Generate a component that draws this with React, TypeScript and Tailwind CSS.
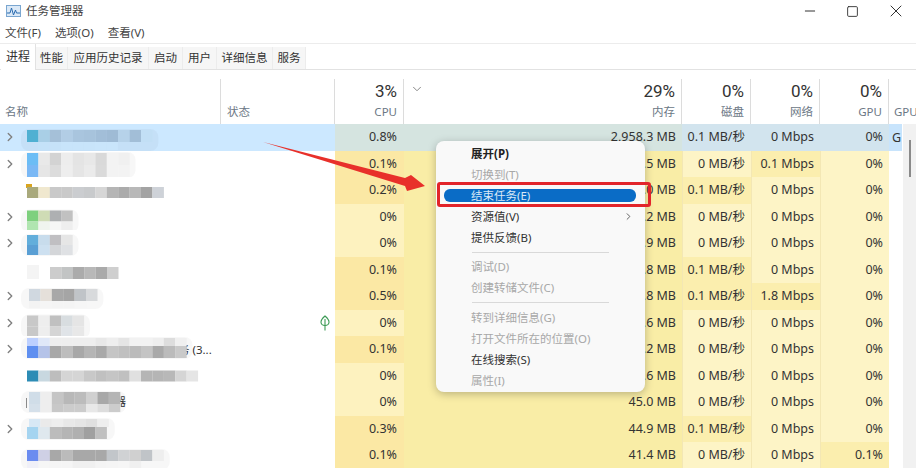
import { ChevronDown, ChevronRight, Minus, Square, X } from 'lucide-react';

const FONT = "font-['Noto_Sans','Noto_Sans_CJK_SC',sans-serif]";

// 每行的马赛克：y 相对行顶，x 默认从 27 开始，单元 11.4px 宽
type Mosaic = { y: number; h: number; x?: number; w?: number; cells: string[] };

type Row = {
  cpu: string;
  mem: string;
  disk: string;
  net: string;
  gpu: string;
  expand?: boolean;
  mosaic: Mosaic[];
};

const rows: Row[] = [
  {
    cpu: '0.8%', mem: '2,958.3 MB', disk: '0.1 MB/秒', net: '0 Mbps', gpu: '0%', expand: true,
    mosaic: [
      { y: 6, h: 12, cells: ['#4fb0d2', '#a9cfe6', '#a5c0d8', '#b2cde5', '#a9c5de', '#a7c3dc', '#a2bed8', '#9fbbd5', '#b6d2e9', '#a2bed7', '#c2dff5'] },
      { y: 18, h: 8, x: 38, cells: ['#c4e2f8', '#c6e2f8', '#c8e4fa', '#c8e4fa', '#c8e4fa', '#c9e5fb', '#c9e5fb'] },
    ],
  },
  {
    cpu: '0.1%', mem: '271.5 MB', disk: '0 MB/秒', net: '0.1 Mbps', gpu: '0%', expand: true,
    mosaic: [
      { y: 2, h: 12, cells: ['#6cbdf5', '#e9e9e9', '#d3d3d3', '#ededed', '#e4e4e4', '#e8e8e8', '#d9d9d9', '#f3f3f3', '#f0f0f0'] },
      { y: 14, h: 12, cells: ['#7ab8f5', '#e6e6e6', '#dcdcdc', '#eeeeee', '#e5e5e5', '#ebebeb', '#dadada', '#f3f3f3', '#f3f3f3'] },
    ],
  },
  {
    cpu: '0.2%', mem: '190.0 MB', disk: '0.1 MB/秒', net: '0 Mbps', gpu: '0%',
    mosaic: [
      { y: 7, h: 4, x: 26, w: 6, cells: ['#d9a520'] },
      { y: 10, h: 11, cells: ['#a9a97c', '#f0e8cf', '#c9c9c9', '#c9c9c9', '#cbcdd0', '#c8cacc', '#d6d6d6', '#b5b5b5', '#ababab', '#b8b8b8', '#a3a3a3', '#ced2d8'] },
    ],
  },
  {
    cpu: '0%', mem: '151.2 MB', disk: '0 MB/秒', net: '0 Mbps', gpu: '0%', expand: true,
    mosaic: [
      { y: 6.5, h: 11, cells: ['#7ed07e', '#cfdcb5', '#aeb0b2', '#c1c1c1'] },
      { y: 17.5, h: 10, cells: ['#b0e5b0', '#f0f4ee', '#f6f6f6', '#eeeeee'] },
    ],
  },
  {
    cpu: '0%', mem: '128.9 MB', disk: '0 MB/秒', net: '0 Mbps', gpu: '0%', expand: true,
    mosaic: [
      { y: 5, h: 10, cells: ['#62aedb', '#c8dcec', '#c0bfc2', '#e6e6e6'] },
      { y: 15, h: 10, cells: ['#5a9fd4', '#cde0f0', '#d4d6d9', '#dfe1e4'] },
    ],
  },
  {
    cpu: '0.1%', mem: '102.8 MB', disk: '0.1 MB/秒', net: '0 Mbps', gpu: '0%',
    mosaic: [
      { y: 8, h: 14, x: 27, w: 12, cells: ['#f4f4f4'] },
      { y: 10, h: 12, x: 50, cells: ['#cccccc', '#c2c4c4', '#ababab', '#b8b8b8', '#aaaaaa', '#cfcfcf'] },
    ],
  },
  {
    cpu: '0.5%', mem: '98.8 MB', disk: '0.1 MB/秒', net: '1.8 Mbps', gpu: '0%', expand: true,
    mosaic: [
      { y: 6, h: 12, x: 29, cells: ['#d0d8e0', '#e5e0da', '#a8a8a8', '#a5a5a5', '#c0c4c8', '#d8dadc'] },
      { y: 18, h: 7, x: 29, cells: ['#f3f3f3', '#f5f5f5', '#f4f4f4', '#f4f4f4', '#f6f6f6'] },
    ],
  },
  {
    cpu: '0%', mem: '86.6 MB', disk: '0 MB/秒', net: '0 Mbps', gpu: '0%', expand: true,
    mosaic: [
      { y: 5.5, h: 11, cells: ['#c8c8c8', '#eeeeee', '#c0c0c0', '#d8dde0', '#e5e5e5'] },
      { y: 16.5, h: 11, cells: ['#c8c8c8', '#eeeeee', '#d5d5d5', '#e0e4e8', '#e8e8e8'] },
    ],
  },
  {
    cpu: '0.1%', mem: '72.2 MB', disk: '0 MB/秒', net: '0 Mbps', gpu: '0%', expand: true,
    mosaic: [
      { y: 2, h: 8, cells: ['#bdd0ff', '#e0e8f8', '#eeeeee', '#eeeeee', '#eeeeee', '#eeeeee', '#e8e8e8', '#eeeeee', '#e5e5e5', '#f2f2f2', '#f2f2f2', '#eeeeee', '#dddddd', '#f0f0f0'] },
      { y: 10, h: 12, cells: ['#5f8ff0', '#b5c3e8', '#a8a8a8', '#bdbdbd', '#a8a8a8', '#b5b5b5', '#a9a9a9', '#c5c5c5', '#c0c0c0', '#bbbbbb', '#c4c4c4', '#a9a9a9', '#bbbbbb', '#c9c9c9'] },
    ],
  },
  {
    cpu: '0%', mem: '56.6 MB', disk: '0 MB/秒', net: '0 Mbps', gpu: '0%',
    mosaic: [
      { y: 7.5, h: 11, cells: ['#2d8cb5', '#c8d8e0', '#bdbdbd', '#d5d5d5', '#d5d5d5', '#c8c8c8', '#c0c0c0', '#c5c5c5', '#c0c0c0', '#e0e0e0', '#b5b5b5', '#b5b5b5', '#b8b8b8', '#d5d5d5', '#e5e5e5'] },
    ],
  },
  {
    cpu: '0%', mem: '45.0 MB', disk: '0 MB/秒', net: '0 Mbps', gpu: '0%',
    mosaic: [
      { y: 9, h: 10, x: 26, w: 1, cells: ['#8a8a8a'] },
      { y: 3, h: 12, x: 29, cells: ['#d0dde8', '#eeeeee', '#c5c5c5', '#b8b8b8', '#bcbcbc', '#d0d0d0', '#a8a8a8', '#b5b5b5'] },
      { y: 15, h: 8, x: 29, cells: ['#d5e0ea', '#eeeeee', '#c8c8c8', '#cccccc', '#cccccc', '#e8e8e8', '#dddddd', '#cccccc'] },
    ],
  },
  {
    cpu: '0.3%', mem: '44.9 MB', disk: '0.1 MB/秒', net: '0 Mbps', gpu: '0%', expand: true,
    mosaic: [
      { y: 3, h: 8, x: 29, cells: ['#d8e8f5', '#eaeaea', '#eeeeee', '#e8e8e8', '#e5e5e5', '#e0e0e0', '#eeeeee'] },
      { y: 11, h: 12, cells: ['#a5d4f0', '#dfe8ee', '#bcbcbc', '#b5b5b5', '#b0b0b0', '#a0a0a0', '#c0c0c0'] },
    ],
  },
  {
    cpu: '0.1%', mem: '41.4 MB', disk: '0 MB/秒', net: '0 Mbps', gpu: '0.1%',
    mosaic: [
      { y: 8, h: 11, cells: ['#6b8cf0', '#cfd0e5', '#a8a8a8', '#bbbbbb', '#a8a8a8', '#a8a8a8', '#a8a8a8', '#c2c6ca', '#d0d2d4', '#d0d0d0', '#c0c4c8', '#eeeeee'] },
      { y: 19, h: 8, cells: ['#f0f0f8', '#f6f6f6', '#f5f5f5', '#f5f5f5', '#f0f0f0', '#f0f0f0', '#f4f4f4', '#f5f5f5', '#f6f6f6', '#f0f0f0'] },
    ],
  },
];

const tabs = [
  { label: '性能', w: 'w-[32px]' },
  { label: '应用历史记录', w: 'w-[81px]' },
  { label: '启动', w: 'w-[34px]' },
  { label: '用户', w: 'w-[34px]' },
  { label: '详细信息', w: 'w-[56px]' },
  { label: '服务', w: 'w-[33px]' },
];

const menuTop = [
  { label: '展开(P)', bold: true },
  { label: '切换到(T)', off: true },
  { label: '结束任务(E)', hot: true },
  { label: '资源值(V)', sub: true },
  { label: '提供反馈(B)' },
];

const GRID = 'grid grid-cols-[221px_114px_69px_278px_69px_69px_69px_13px]';

function NameMosaic({ mosaic }: { mosaic: Mosaic[] }) {
  // 两行的马赛克外面有一圈很淡的圆角晕
  const lines = mosaic.filter(m => m.cells.length > 1);
  const halo = lines.length > 1 && {
    top: Math.min(...lines.map(m => m.y)) - 1,
    bottom: Math.max(...lines.map(m => m.y + m.h)) + 1,
    right: Math.max(...lines.map(m => (m.x ?? 27) + m.cells.length * 11.4)) + 6,
  };
  return (
    <svg className="absolute left-0 top-0 overflow-visible" width="220" height="26">
      {halo && (
        <rect x="21" y={halo.top} width={halo.right - 21} height={halo.bottom - halo.top} rx="8" fill="#000" fillOpacity="0.03" />
      )}
      {mosaic.flatMap((m, i) =>
        m.cells.map((c, j) => (
          <rect key={`${i}-${j}`} x={(m.x ?? 27) + j * 11.4} y={m.y} width={m.w ?? 11.5} height={m.h} fill={c} />
        )),
      )}
    </svg>
  );
}

function Heat({ hot, first, children }: { hot: boolean; first: boolean; children: React.ReactNode }) {
  return (
    <div
      className={`flex items-center justify-end pr-[6px] pt-px ${
        first ? 'bg-[#d2e4ee]' : hot ? 'border-l border-[#f3e7b4] bg-[#fbeeae]' : 'border-l border-[#f3e7b4] bg-[#fdf4c6]'
      }`}
    >
      {children}
    </div>
  );
}

function TableRow({ row, index }: { row: Row; index: number }) {
  const first = index === 0;
  return (
    <div className={`${GRID} h-[26.5px] text-[12.5px] text-[#333]`}>
      <div className={`relative flex items-center ${first ? 'bg-[#cce8ff]' : 'bg-white'}`}>
        {row.expand && <ChevronRight className="relative ml-[3px] h-[14px] w-[14px] text-[#808080]" strokeWidth={2.4} />}
        {index === 8 && <span className="ml-[161px] text-[11.5px] whitespace-pre text-[#333]">务 (3...</span>}
        {index === 10 && <span className="ml-[115px] text-[11px] text-[#333]">器</span>}
        <NameMosaic mosaic={row.mosaic} />
      </div>
      <div className={`flex items-center justify-end pr-[5px] ${first ? 'bg-[#cce8ff]' : 'bg-white'}`}>
        {index === 7 && (
          <svg width="10" height="16" viewBox="0 0 10 16" fill="none" stroke="#3c9a54" strokeWidth="1.1">
            <path d="M5 1C2 3.500.8 5.500 1 7.500c.3 2 2 3 4 3s3.700-1 4-3C9.200 5.500 8 3.500 5 1Z" />
            <path d="M5 4v11.500" />
          </svg>
        )}
      </div>
      <div
        className={`flex items-center justify-end pr-[7px] pt-px ${first ? 'bg-[#d5e4e0]' : row.cpu === '0%' ? 'bg-[#fdf2bf]' : 'bg-[#fbe8a4]'}`}
      >
        {row.cpu}
      </div>
      <div className={`flex items-center justify-end pr-[6px] pt-px ${first ? 'bg-[#d5e4e0]' : 'bg-[#f9eda6]'}`}>{row.mem}</div>
      <Heat first={first} hot={row.disk.startsWith('0.1')}>{row.disk}</Heat>
      <Heat first={first} hot={row.net !== '0 Mbps'}>{row.net}</Heat>
      <Heat first={first} hot={row.gpu !== '0%'}>{row.gpu}</Heat>
      <div className={`overflow-hidden pl-[3px] pt-px leading-[26px] ${first ? 'bg-[#c8e4fc]' : 'bg-white'}`}>{first ? 'G' : ''}</div>
    </div>
  );
}

function HeaderCell({ top, label, extra }: { top: string; label: string; extra?: boolean }) {
  return (
    <div className="relative flex flex-col items-end border-r border-[#dcdcdc] pr-[6px] pt-px">
      {extra && <ChevronDown className="absolute left-[6px] top-[3px] h-[14px] w-[14px] text-[#777]" strokeWidth={1.5} />}
      <div className="font-['Roboto',sans-serif] text-[17px] leading-[22px] text-[#333]">{top}</div>
      <div className="mt-px text-[11.5px] leading-[17px] text-[#6b7785]">{label}</div>
    </div>
  );
}

function MenuItem({ label, bold, off, hot, sub }: { label: string; bold?: boolean; off?: boolean; hot?: boolean; sub?: boolean }) {
  return (
    <div className="relative flex h-[21px] items-center pl-[35px]">
      {hot && <div className="absolute left-[8px] right-[9px] top-[4px] h-[13px] rounded-[6px] bg-[#0a6cc6]" />}
      <span
        className={`relative text-[11.5px] ${bold ? 'font-bold text-[#222]' : off ? 'text-[#a8a8a8]' : hot ? 'text-[#d9e8f6]' : 'text-[#333]'}`}
      >
        {label}
      </span>
      {sub && <ChevronRight className="absolute right-[11px] top-[5px] h-[11px] w-[11px] text-[#555]" strokeWidth={2} />}
    </div>
  );
}

export default function App() {
  return (
    <div className={`relative h-[468px] w-[916px] overflow-hidden bg-white ${FONT}`}>
      <div className="flex h-[22px] items-center pl-[6px]">
        <svg width="15" height="12" viewBox="0 0 15 12" fill="none">
          <rect x="0.5" y="0.5" width="14" height="11" fill="#dbe9f7" stroke="#7aa6d0" />
          <path d="M1 8h3l1.500-5 2 7 2-5 1 3h3.500" stroke="#2b6cb0" strokeWidth="1" />
        </svg>
        <span className="ml-[5px] text-[11.5px] text-[#444]">任务管理器</span>
        <div className="ml-auto flex items-center text-[#333]">
          <div className="flex w-[38px] justify-center">
            <Minus className="h-[16px] w-[16px]" strokeWidth={1.5} />
          </div>
          <div className="flex w-[47px] justify-center">
            <Square className="h-[13px] w-[13px]" strokeWidth={1.7} />
          </div>
          <div className="flex w-[40px] justify-center">
            <X className="h-[20px] w-[20px]" strokeWidth={1.2} />
          </div>
        </div>
      </div>

      <div className="flex h-[22px] items-center gap-[14px] border-b border-[#ececec] pl-[5px] text-[11.5px] text-[#444]">
        <span>文件(F)</span>
        <span>选项(O)</span>
        <span>查看(V)</span>
      </div>

      <div className="flex h-[26px] items-end border-b border-[#e2e2e2] pl-[1px] text-[11.5px] text-[#333]">
        <div className="-mb-px flex h-[26px] w-[35px] items-center justify-center border-r border-[#e2e2e2] bg-white text-[12px]">进程</div>
        {tabs.map(tab => (
          <div key={tab.label} className={`flex h-[22px] items-center justify-center border-r border-[#ececec] bg-[#f6f6f6] ${tab.w}`}>
            {tab.label}
          </div>
        ))}
      </div>

      <div className={`${GRID} h-[54px] pt-[9px]`}>
        <div className="flex items-end border-r border-[#dcdcdc] pb-[4px] pl-[5px] text-[11.5px] text-[#6b7785]">名称</div>
        <div className="flex items-end border-r border-[#dcdcdc] pb-[4px] pl-[6px] text-[11.5px] text-[#6b7785]">状态</div>
        <HeaderCell top="3%" label="CPU" />
        <HeaderCell top="29%" label="内存" extra />
        <HeaderCell top="0%" label="磁盘" />
        <HeaderCell top="0%" label="网络" />
        <HeaderCell top="0%" label="GPU" />
        <div className="whitespace-nowrap pl-[5px] pt-[24px] text-[11.5px] leading-[17px] text-[#6b7785]">GPU</div>
      </div>

      <div className="flex">
        <div>
          {rows.map((row, i) => (
            <TableRow key={i} row={row} index={i} />
          ))}
        </div>
        <div className="ml-px flex h-[344px] w-[13px] justify-center bg-[#f1f1f1] pt-[16px]">
          <div className="h-[37px] w-[2px] bg-[#8a8a8a]" />
        </div>
      </div>

      {/* 右键菜单 */}
      <div className="absolute left-[436px] top-[141px] h-[251px] w-[209px] rounded-[8px] bg-[#f9f9f9] pt-[2px] shadow-[0_2px_8px_rgba(0,0,0,0.25)]">
        {menuTop.map(item => (
          <MenuItem key={item.label} {...item} />
        ))}
        <div className="mx-[36px] my-[3.5px] h-px bg-[#d9d9d9]" />
        <MenuItem label="调试(D)" off />
        <MenuItem label="创建转储文件(C)" off />
        <div className="mx-[36px] my-[4px] h-px bg-[#d9d9d9]" />
        <MenuItem label="转到详细信息(G)" off />
        <MenuItem label="打开文件所在的位置(O)" off />
        <MenuItem label="在线搜索(S)" />
        <MenuItem label="属性(I)" off />
      </div>

      {/* 标注 */}
      <div className="absolute left-[437px] top-[182px] h-[25px] w-[214px] rounded-[3px] border-[3px] border-[#e2252b]" />
      <svg className="absolute left-0 top-0" width="916" height="468">
        <polygon points="263,142 405,178 411,175 425,186 407,191 405,186" fill="#e8302a" />
      </svg>
    </div>
  );
}
